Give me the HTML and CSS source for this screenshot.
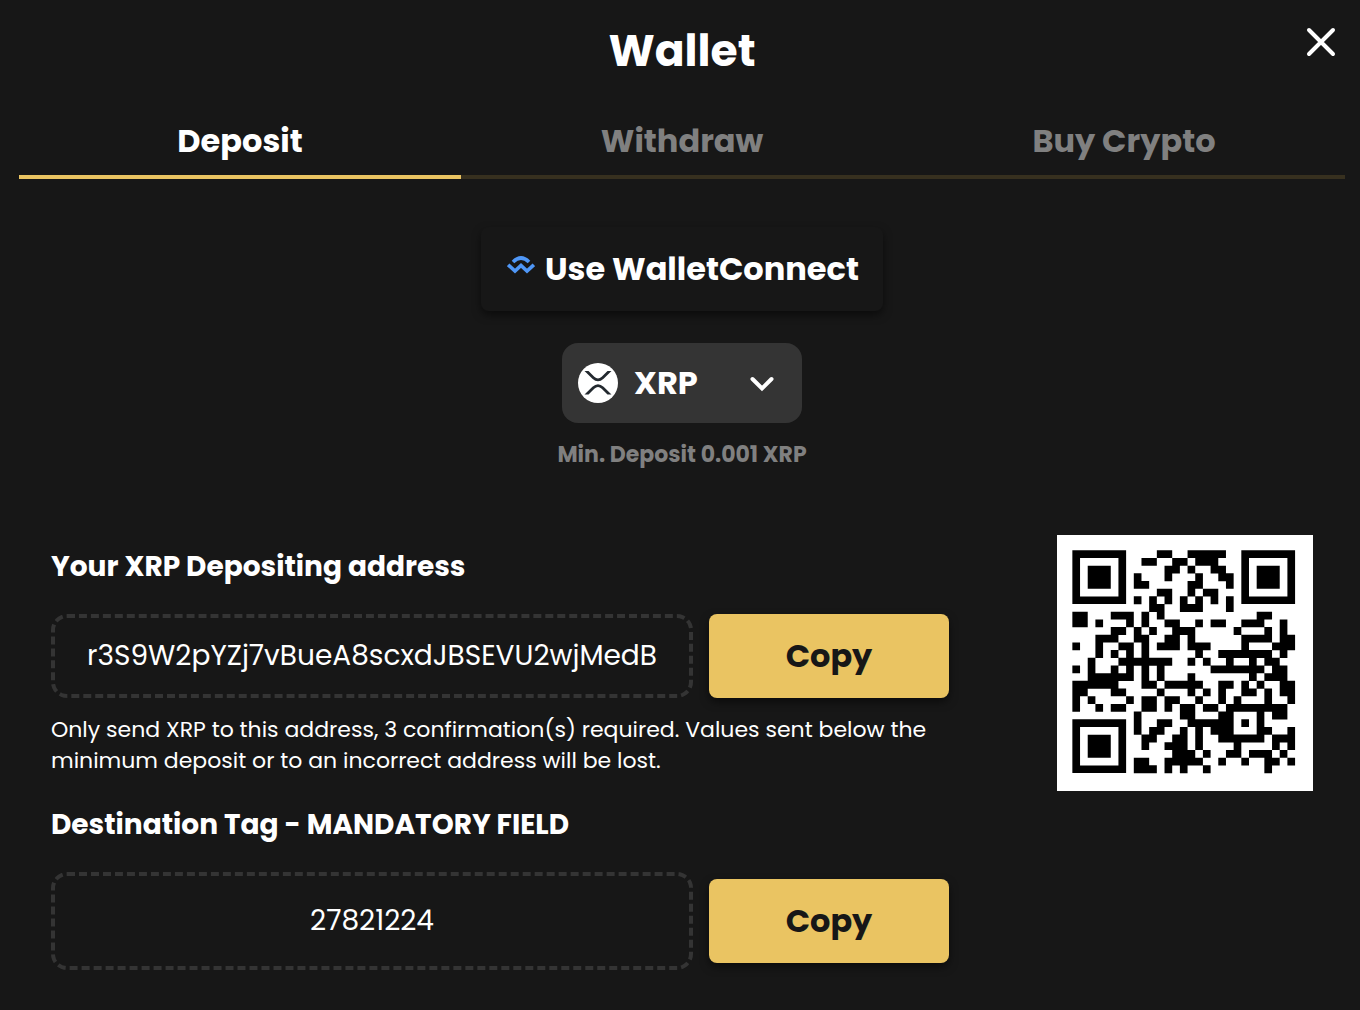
FILE: index.html
```
<!DOCTYPE html>
<html lang="en">
<head>
  <meta charset="UTF-8">
  <meta name="viewport" content="width=device-width, initial-scale=1">
  <title>Wallet</title>
  <link rel="stylesheet" href="styles.css">
</head>
<body>

  <main class="wallet">
    <header class="wallet-header">
      <h1>Wallet</h1>
      <button class="close" type="button" aria-label="Close">
        <svg width="32" height="32" viewBox="0 0 32 32" fill="none" stroke="#fff" stroke-width="4" stroke-linecap="round">
          <path d="M4 4L28 28M28 4L4 28"/>
        </svg>
      </button>
    </header>

    <nav class="tabs">
      <button class="tab active" type="button">Deposit</button>
      <button class="tab" type="button">Withdraw</button>
      <button class="tab" type="button">Buy Crypto</button>
    </nav>

    <section class="method">
      <button class="connect" type="button">
        <svg width="28" height="26" viewBox="0 0 28 26" fill="none" stroke="#4f97f7" stroke-width="3.600">
          <path d="M6 6Q14 -2 22 6"/>
          <path d="M1.200 8.800L8 15L14 9.500L20 15L26.800 8.800"/>
        </svg>
        Use WalletConnect
      </button>

      <div class="currency">
        <svg class="coin" width="40" height="40" viewBox="0 0 40 40">
          <circle cx="20" cy="20" r="20" fill="#fff"/>
          <path fill="#23292f" d="M6.500 8H10.500L16.300 13.800Q20 17.200 23.700 13.800L29.500 8H33.500L25.600 15.700Q20 20.700 14.400 15.700Z"/>
          <path fill="#23292f" d="M6.500 31.500H10.500L16.300 25.700Q20 22.300 23.700 25.700L29.500 31.500H33.500L25.600 23.800Q20 18.800 14.400 23.800Z"/>
        </svg>
        <select aria-label="Currency">
          <option>XRP</option>
        </select>
        <svg class="arrow" width="24" height="16" viewBox="0 0 24 16" fill="none" stroke="#fff" stroke-width="4" stroke-linecap="round">
          <path d="M2.500 3L12 12.500L21.500 3"/>
        </svg>
      </div>
      <p class="minimum">Min. Deposit 0.001 XRP</p>
    </section>

    <section class="details">
      <div class="fields">
        <label for="address">Your XRP Depositing address</label>
        <div class="row">
          <input id="address" type="text" value="r3S9W2pYZj7vBueA8scxdJBSEVU2wjMedB" readonly>
          <button class="copy" type="button">Copy</button>
        </div>
        <p class="note">Only send XRP to this address, 3 confirmation(s) required. Values sent below the minimum deposit or to an incorrect address will be lost.</p>

        <label for="tag">Destination Tag - MANDATORY FIELD</label>
        <div class="row">
          <input id="tag" class="tall" type="text" value="27821224" readonly>
          <button class="copy" type="button">Copy</button>
        </div>
      </div>

      <svg class="qr" viewBox="-2 -2 33.333 33.333" role="img" aria-label="Deposit address QR code">
        <rect x="-2" y="-2" width="34" height="34" fill="#fff"/>
        <!-- finder squares -->
        <g fill="none" stroke="#000">
          <path d="M.5 .5h6v6h-6zM22.500 .5h6v6h-6zM.5 22.500h6v6h-6z"/>
          <path stroke-width="3" d="M2 3.500h3M24 3.500h3M2 25.500h3"/>
        </g>
        <!-- modules, one line per row -->
        <g transform="translate(0 .5)" stroke="#000" stroke-width="1.020">
          <path d="M11 0h2M15 0h5
            M9 1h2M13 1h2M16 1h3
            M12 2h2M15 2h1M18 2h2
            M8 3h1M12 3h1M16 3h1M19 3h2
            M8 4h2M15 4h2M20 4h1
            M11 5h2M15 5h1M17 5h2
            M8 6h1M10 6h1M12 6h1M14 6h1M16 6h1M18 6h1M20 6h1
            M10 7h2M14 7h3M20 7h1
            M0 8h2M5 8h3M9 8h1M11 8h1M24 8h2
            M0 9h2M3 9h1M7 9h1M9 9h1M12 9h2M16 9h1M18 9h2M22 9h3M27 9h1
            M5 10h2M8 10h1M10 10h1M13 10h3M21 10h1M25 10h1M27 10h1
            M3 11h3M8 11h2M12 11h2M15 11h1M22 11h4M27 11h2
            M0 12h1M3 12h1M6 12h2M9 12h1M11 12h3M15 12h3M22 12h1M26 12h3
            M3 13h1M5 13h1M7 13h1M9 13h1M16 13h1M19 13h7M27 13h1
            M2 14h1M6 14h7M15 14h1M17 14h1M20 14h1M23 14h1M25 14h2
            M0 15h1M2 15h1M5 15h1M7 15h1M9 15h1M11 15h1M18 15h7M26 15h2
            M2 16h6M9 16h1M11 16h1M15 16h1M23 16h1M25 16h3
            M0 17h6M9 17h2M12 17h5M19 17h2M22 17h1M24 17h1M27 17h2
            M0 18h2M5 18h2M11 18h1M15 18h1M17 18h1M19 18h1M22 18h2M25 18h1M27 18h2
            M0 19h1M2 19h1M7 19h1M9 19h2M12 19h2M16 19h1M19 19h1M21 19h1M25 19h1M28 19h1
            M0 20h1M3 20h1M5 20h2M9 20h2M12 20h1M14 20h2M17 20h2M20 20h8
            M8 21h1M14 21h2M19 21h2M24 21h1M26 21h2
            M8 22h1M11 22h2M15 22h6M22 22h1M24 22h1
            M8 23h1M10 23h2M14 23h1M16 23h1M18 23h3M24 23h2M28 23h1
            M9 24h2M13 24h2M16 24h1M19 24h6M26 24h3
            M9 25h1M12 25h3M16 25h1M21 25h1M26 25h1M28 25h1
            M13 26h3M17 26h1M20 26h2M23 26h3M27 26h1
            M8 27h2M12 27h5M19 27h1M22 27h1M25 27h2M28 27h1
            M8 28h3M12 28h1M14 28h1M17 28h1M25 28h1"/>
        </g>
      </svg>
    </section>
  </main>

</body>
</html>
```
FILE: styles.css
```
* {
  box-sizing: border-box;
}

body {
  margin: 0;
  background: #171717;
  color: #fff;
  font-family: Poppins, Inter, sans-serif;
}

button,
input,
select {
  font-family: inherit;
  color: inherit;
}

button {
  border: none;
  background: none;
  cursor: pointer;
}

.wallet {
  padding: 21px 15px 40px 19px;
}

.wallet-header {
  position: relative;
  text-align: center;
}

h1 {
  margin: 0;
  font-size: 44px;
  line-height: 60px;
  font-weight: 700;
}

.close {
  position: absolute;
  top: 5px;
  right: 8px;
  padding: 0;
  line-height: 0;
}

.tabs {
  display: flex;
  margin-top: 23px;
}

.tab {
  flex: 1;
  padding: 12px 0 10px;
  border-bottom: 4px solid #37301f;
  color: #808080;
  font-size: 32px;
  line-height: 49px;
  font-weight: 700;
}

.tab.active {
  border-color: #eac462;
  color: #fff;
}

.method {
  display: flex;
  flex-direction: column;
  align-items: center;
  margin-top: 48px;
}

.connect {
  display: flex;
  align-items: center;
  gap: 10px;
  height: 84px;
  padding: 0 24px 0 26px;
  border-radius: 8px;
  box-shadow: 0 4px 8px rgba(0, 0, 0, 0.5);
  font-size: 32px;
  font-weight: 700;
}

.currency {
  position: relative;
  width: 240px;
  margin-top: 32px;
}

.currency select {
  display: block;
  width: 100%;
  height: 80px;
  padding: 0 64px 2px 72px;
  border: none;
  border-radius: 16px;
  background: #343434;
  appearance: none;
  font-size: 32px;
  font-weight: 700;
}

.coin,
.arrow {
  position: absolute;
  pointer-events: none;
}

.coin {
  top: 20px;
  left: 16px;
}

.arrow {
  top: 33px;
  right: 28px;
}

.minimum {
  margin: 16px 0 0;
  color: #808080;
  font-size: 22px;
  line-height: 32px;
  font-weight: 700;
}

.details {
  display: flex;
  justify-content: space-between;
  align-items: flex-start;
  gap: 32px;
  margin-top: 64px;
  padding: 0 32px;
}

.fields {
  flex: 0 1 898px;
  min-width: 0;
}

.fields label {
  display: block;
  padding: 12px 0 27px;
  font-size: 28px;
  line-height: 40px;
  font-weight: 700;
}

.row {
  display: flex;
  align-items: center;
  gap: 16px;
}

.row input {
  flex: 1;
  min-width: 0;
  height: 84px;
  padding: 0 24px;
  border: 4px dashed #343434;
  border-radius: 16px;
  background: none;
  font-size: 28px;
  text-align: center;
}

.row .tall {
  height: 98px;
}

.copy {
  width: 240px;
  height: 84px;
  border-radius: 8px;
  background: #eac462;
  box-shadow: 0 4px 8px rgba(0, 0, 0, 0.5);
  color: #171717;
  font-size: 32px;
  font-weight: 700;
}

.note {
  margin: 16px 0 17px;
  font-size: 22px;
  line-height: 31px;
}

.qr {
  flex: none;
  width: 256px;
  height: 256px;
}
```
